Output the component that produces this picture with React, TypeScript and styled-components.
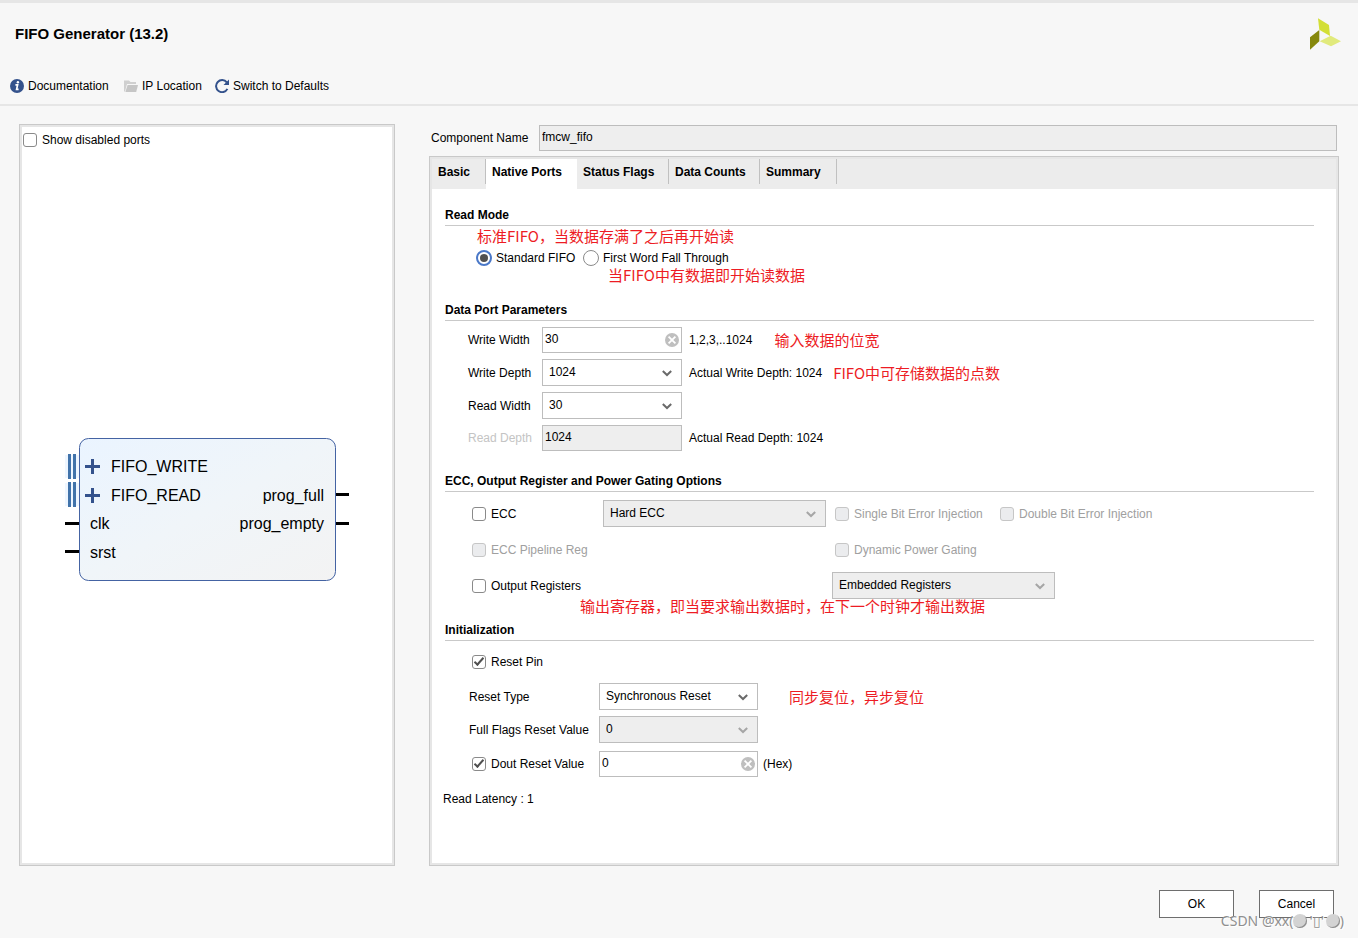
import React from "react";
import styled, { createGlobalStyle, css } from "styled-components";

const Global = createGlobalStyle`
  *, *::before, *::after { box-sizing: border-box; }
  body {
    margin: 0;
    background: #f7f7f7;
    color: #000;
    font: 12px/16px "Liberation Sans", Arial, sans-serif;
  }
  button, input, select { font: inherit; color: inherit; }
`;

const Page = styled.div`
  position: relative;
  min-height: 100vh;
  display: flex;
  flex-direction: column;
  border-top: 3px solid #e6e6e6;
`;

const Header = styled.header`
  padding: 15px 17px 8px 15px;
  border-bottom: 2px solid #e6e6e6;
`;

const TitleRow = styled.div`
  display: flex;
  align-items: center;
  justify-content: space-between;
`;

const Title = styled.h1`
  margin: 0;
  font-size: 15px;
  line-height: 20px;
`;

const Toolbar = styled.nav`
  display: grid;
  grid-template-columns: 102px 79px max-content;
  column-gap: 12px;
  margin: 26px 0 0 -5px;
`;

const ToolButton = styled.button`
  display: flex;
  align-items: center;
  gap: 4px;
  height: 20px;
  padding: 0;
  border: 0;
  background: none;
  white-space: nowrap;
`;

const Main = styled.main`
  flex: 1;
  display: grid;
  grid-template-columns: 376px minmax(0, 1fr);
  column-gap: 34px;
  padding: 18px 19px 0;
`;

const Frame = styled.section`
  display: flex;
  flex-direction: column;
  border: 1px solid #c9c9c9;
  background: #fff;
  box-shadow: inset 0 0 0 2px #e6e6e6;
  padding: 2px;
`;

const PortsHead = styled.div`
  height: 29px;
  padding: 5px 1px;
`;

const Diagram = styled.div`
  flex: 1;
  display: flex;
  align-items: center;
  justify-content: center;
`;

const Config = styled.div`
  display: flex;
  flex-direction: column;
`;

const NameRow = styled.div`
  display: grid;
  grid-template-columns: 108px minmax(0, 1fr);
  align-items: center;
  padding: 1px 2px 0;
  margin-bottom: 5px;
`;

const TabFrame = styled(Frame)`
  flex: 1;
`;

const TabList = styled.div`
  display: grid;
  grid-template-columns: 54px 91px 92px 91px 77px;
  align-items: start;
  height: 30px;
  background: #ececec;
`;

const Tab = styled.button<{ $active?: boolean }>`
  height: ${(p) => (p.$active ? 30 : 25)}px;
  padding: 0 0 ${(p) => (p.$active ? 4 : 0)}px 6px;
  border: 0;
  border-right: ${(p) => (p.$active ? "0" : "1px solid #c0c0c0")};
  background: ${(p) => (p.$active ? "#fff" : "none")};
  font-weight: bold;
  text-align: left;
  white-space: nowrap;
`;

const TabBody = styled.div`
  padding: 18px 22px 18px 11px;
`;

const SectionTitle = styled.h2`
  margin: 0 0 0 2px;
  padding-bottom: 2px;
  border-bottom: 1px solid #c9c9c9;
  font-size: 12px;
  line-height: 16px;
`;

const Group = styled.div<{ $top: number; $bottom: number }>`
  margin-left: 2px;
  padding-top: ${(p) => p.$top}px;
  padding-bottom: ${(p) => p.$bottom}px;
`;

const Row = styled.div<{ $indent: number; $below?: number }>`
  display: flex;
  align-items: center;
  padding-left: ${(p) => p.$indent}px;
  margin-bottom: ${(p) => p.$below ?? 0}px;
  white-space: nowrap;
`;

const OptionRow = styled(Row)`
  height: 27px;
`;

const FieldLabel = styled.label<{ $width: number; $muted?: boolean }>`
  width: ${(p) => p.$width}px;
  color: ${(p) => (p.$muted ? "#c4c4c4" : "inherit")};
`;

const Hint = styled.span<{ $gap?: number }>`
  margin-left: ${(p) => p.$gap ?? 7}px;
`;

const Note = styled.span<{ $gap?: number }>`
  margin-left: ${(p) => p.$gap ?? 0}px;
  color: #ed1c24;
  font: 15px/16px "Noto Sans CJK SC", sans-serif;
`;

const ChoiceLabel = styled.label<{ $width?: number; $gap?: number; $muted?: boolean }>`
  display: flex;
  align-items: center;
  gap: 5px;
  width: ${(p) => (p.$width ? `${p.$width}px` : "auto")};
  margin-left: ${(p) => p.$gap ?? 0}px;
  color: ${(p) => (p.$muted ? "#a0a0a0" : "inherit")};
`;

const checkMark = css`
  &:checked::after {
    content: "";
    width: 10px;
    height: 5px;
    margin-top: -3px;
    border: solid #505050;
    border-width: 0 0 2px 2px;
    transform: rotate(-48deg);
  }
`;

const CheckBox = styled.input.attrs({ type: "checkbox" })`
  appearance: none;
  display: flex;
  align-items: center;
  justify-content: center;
  width: 14px;
  height: 14px;
  margin: 0;
  border: 1px solid #8a8a8a;
  border-radius: 3px;
  background: #fff;
  ${checkMark}
  &:disabled {
    border-color: #c6c6c6;
    background: #ebecee;
  }
`;

const Radio = styled.input.attrs({ type: "radio" })`
  appearance: none;
  display: flex;
  align-items: center;
  justify-content: center;
  width: 16px;
  height: 16px;
  margin: 0 -1px 0 0;
  border: 1px solid #8a8a8a;
  border-radius: 50%;
  background: #fff;
  &:checked { border: 2px solid #4a78c8; }
  &:checked::after {
    content: "";
    width: 8px;
    height: 8px;
    border-radius: 50%;
    background: #505050;
  }
`;

const TextBox = styled.input`
  display: block;
  width: 100%;
  height: 26px;
  padding: 0 24px 2px 2px;
  border: 1px solid #bdbdbd;
  border-radius: 0;
  background: #fff;
  &:read-only { background: #eee; }
`;

const Control = styled.div<{ $width: number; $gap?: number }>`
  position: relative;
  width: ${(p) => p.$width}px;
  margin-left: ${(p) => p.$gap ?? 0}px;
`;

const SelectBox = styled.select`
  appearance: none;
  display: block;
  width: 100%;
  height: 27px;
  padding: 0 26px 2px 6px;
  border: 1px solid #bdbdbd;
  border-radius: 0;
  background: #fff;
  &:disabled {
    background: #eee;
    color: #000;
    opacity: 1;
  }
`;

const Chevron = styled.svg<{ $muted?: boolean }>`
  position: absolute;
  right: 10px;
  top: 11px;
  pointer-events: none;
  stroke: ${(p) => (p.$muted ? "#a6a6a6" : "#6a6a6a")};
`;

const ClearButton = styled.button`
  position: absolute;
  right: 3px;
  top: 6px;
  display: flex;
  padding: 0;
  border: 0;
  background: none;
`;

const Footer = styled.footer`
  display: flex;
  justify-content: flex-end;
  gap: 25px;
  padding: 24px 24px 20px;
`;

const DialogButton = styled.button`
  width: 75px;
  height: 28px;
  padding: 0;
  border: 1px solid #6e6e6e;
  background: #fff;
`;

const Watermark = styled.div`
  position: absolute;
  right: 14px;
  bottom: 7px;
  display: flex;
  align-items: center;
  color: #8f8f8f;
  font: 14px/20px "Noto Sans", sans-serif;
  text-shadow: 1px 1px 0 #fff;
  pointer-events: none;
`;

const Dot = styled.span`
  width: 14px;
  height: 14px;
  border-radius: 50%;
  background: #d3d3d3;
  box-shadow: inset -1px -1px 0 #8f8f8f;
`;

const Mouth = styled.span`
  padding: 0 2px;
`;

const Logo = () => (
  <svg width="32" height="32" viewBox="0 0 32 32" aria-label="Xilinx">
    <path d="M9 0.3 20 7 21 18 10.3 11.7Z" fill="#d3df36" />
    <path d="M10.3 12V23.3L1 31.7V19.3Z" fill="#86880c" />
    <path d="M10.7 23.3 21.7 17.7 32 23.3 22 28.3Z" fill="#e1ea7c" />
  </svg>
);

const InfoIcon = () => (
  <svg width="14" height="14" viewBox="0 0 14 14">
    <circle cx="7" cy="7" r="7" fill="#34528c" />
    <circle cx="7.9" cy="3.3" r="1.2" fill="#fff" />
    <path d="M5.4 5.9H7.6L6.6 10.4H8.6" fill="none" stroke="#fff" strokeWidth="1.7" />
  </svg>
);

const FolderIcon = () => (
  <svg width="14" height="14" viewBox="0 0 14 14">
    <path d="M0 12.5V1.5H5L6.5 3H12V5H3L1 12.5Z" fill="#d0d0d0" />
    <path d="M3.6 6H14L12.2 13H1.4Z" fill="#c6c6c6" />
  </svg>
);

const RefreshIcon = () => (
  <svg width="14" height="14" viewBox="0 0 14 14">
    <path d="M11.8 3.4A6 6 0 1 0 12.4 9.9" fill="none" stroke="#34528c" strokeWidth="2" />
    <path d="M14 0.5V6H8.5Z" fill="#34528c" />
  </svg>
);

const BUS_TOPS = [16, 44];

const BlockSymbol = () => (
  <svg width="284" height="143" viewBox="0 0 284 143" fontSize="16" fontFamily='"Liberation Sans", Arial, sans-serif'>
    <defs>
      <linearGradient id="block" x1="0" y1="0" x2="1" y2="1">
        <stop offset="0" stopColor="#eaf4ff" />
        <stop offset="0.5" stopColor="#f0f5f9" />
        <stop offset="1" stopColor="#f3f3f3" />
      </linearGradient>
    </defs>
    <rect x="14.5" y="0.5" width="256" height="142" rx="9" fill="url(#block)" stroke="#4463a3" />
    {BUS_TOPS.map((y) => (
      <g key={y}>
        <rect x="0" y={y + 1} width="14" height="23" fill="#eef6ff" />
        <path d={`M3 ${y}h3v25h-3zM8 ${y}h3v25h-3z`} fill="#4173aa" />
      </g>
    ))}
    <path d="M20 28.5H35M27.5 21V36M20 57.5H35M27.5 50V65" stroke="#34528c" strokeWidth="3" />
    <path d="M0 85.5H14M0 113.5H14M271 56.5H284M271 85.5H284" stroke="#000" strokeWidth="3" />
    <text x="46" y="34">FIFO_WRITE</text>
    <text x="46" y="63">FIFO_READ</text>
    <text x="25" y="91">clk</text>
    <text x="25" y="120">srst</text>
    <text x="259" y="63" textAnchor="end">prog_full</text>
    <text x="259" y="91" textAnchor="end">prog_empty</text>
  </svg>
);

type ChoiceProps = { label: string; width?: number; gap?: number; disabled?: boolean; checked?: boolean };

const Check = ({ label, width, gap, disabled, checked }: ChoiceProps) => (
  <ChoiceLabel $width={width} $gap={gap} $muted={disabled}>
    <CheckBox disabled={disabled} defaultChecked={checked} />
    {label}
  </ChoiceLabel>
);

type SelectProps = { value: string; width: number; id?: string; label?: string; gap?: number; disabled?: boolean };

const Select = ({ value, width, id, label, gap, disabled }: SelectProps) => (
  <Control $width={width} $gap={gap}>
    <SelectBox id={id} aria-label={label} disabled={disabled} defaultValue={value}>
      <option>{value}</option>
    </SelectBox>
    <Chevron $muted={disabled} width="10" height="7" viewBox="0 0 10 7">
      <path d="M0.8 1 5 5 9.2 1" fill="none" strokeWidth="2" />
    </Chevron>
  </Control>
);

const ClearableBox = ({ value, width, id, label }: { value: string; width: number; id?: string; label?: string }) => (
  <Control $width={width}>
    <TextBox id={id} aria-label={label} defaultValue={value} />
    <ClearButton type="button" aria-label="Clear">
      <svg width="14" height="14" viewBox="0 0 14 14">
        <circle cx="7" cy="7" r="7" fill="#bfbfbf" />
        <path d="M3.6 3.6 10.4 10.4M10.4 3.6 3.6 10.4" stroke="#fff" strokeWidth="1.8" />
      </svg>
    </ClearButton>
  </Control>
);

export default function App() {
  return (
    <>
      <Global />
      <Page>
        <Header>
          <TitleRow>
            <Title>FIFO Generator (13.2)</Title>
            <Logo />
          </TitleRow>
          <Toolbar>
            <ToolButton><InfoIcon />Documentation</ToolButton>
            <ToolButton><FolderIcon />IP Location</ToolButton>
            <ToolButton><RefreshIcon />Switch to Defaults</ToolButton>
          </Toolbar>
        </Header>

        <Main>
          <Frame>
            <PortsHead>
              <Check label="Show disabled ports" />
            </PortsHead>
            <Diagram>
              <BlockSymbol />
            </Diagram>
          </Frame>

          <Config>
            <NameRow>
              <label htmlFor="component-name">Component Name</label>
              <TextBox id="component-name" readOnly defaultValue="fmcw_fifo" />
            </NameRow>
            <TabFrame>
              <TabList role="tablist">
                <Tab role="tab">Basic</Tab>
                <Tab role="tab" aria-selected $active>Native Ports</Tab>
                <Tab role="tab">Status Flags</Tab>
                <Tab role="tab">Data Counts</Tab>
                <Tab role="tab">Summary</Tab>
              </TabList>
              <TabBody>
                <SectionTitle>Read Mode</SectionTitle>
                <Group $top={2} $bottom={19}>
                  <Row $indent={32} $below={6}>
                    <Note>标准FIFO，当数据存满了之后再开始读</Note>
                  </Row>
                  <Row $indent={31} $below={1}>
                    <ChoiceLabel $width={107}>
                      <Radio name="read-mode" defaultChecked />
                      Standard FIFO
                    </ChoiceLabel>
                    <ChoiceLabel>
                      <Radio name="read-mode" />
                      First Word Fall Through
                    </ChoiceLabel>
                  </Row>
                  <Row $indent={163}>
                    <Note>当FIFO中有数据即开始读数据</Note>
                  </Row>
                </Group>

                <SectionTitle>Data Port Parameters</SectionTitle>
                <Group $top={6} $bottom={22}>
                  <Row $indent={23} $below={6}>
                    <FieldLabel $width={74} htmlFor="write-width">Write Width</FieldLabel>
                    <ClearableBox id="write-width" value="30" width={140} />
                    <Hint>1,2,3,..1024</Hint>
                    <Note $gap={22}>输入数据的位宽</Note>
                  </Row>
                  <Row $indent={23} $below={6}>
                    <FieldLabel $width={74} htmlFor="write-depth">Write Depth</FieldLabel>
                    <Select id="write-depth" value="1024" width={140} />
                    <Hint>Actual Write Depth: 1024</Hint>
                    <Note $gap={11}>FIFO中可存储数据的点数</Note>
                  </Row>
                  <Row $indent={23} $below={6}>
                    <FieldLabel $width={74} htmlFor="read-width">Read Width</FieldLabel>
                    <Select id="read-width" value="30" width={140} />
                  </Row>
                  <Row $indent={23}>
                    <FieldLabel $width={74} $muted htmlFor="read-depth">Read Depth</FieldLabel>
                    <Control $width={140}>
                      <TextBox id="read-depth" readOnly defaultValue="1024" />
                    </Control>
                    <Hint>Actual Read Depth: 1024</Hint>
                  </Row>
                </Group>

                <SectionTitle>ECC, Output Register and Power Gating Options</SectionTitle>
                <Group $top={8} $bottom={8}>
                  <OptionRow $indent={27} $below={9}>
                    <Check label="ECC" width={131} />
                    <Select label="ECC type" value="Hard ECC" width={223} disabled />
                    <Check label="Single Bit Error Injection" width={165} gap={9} disabled />
                    <Check label="Double Bit Error Injection" disabled />
                  </OptionRow>
                  <OptionRow $indent={27} $below={9}>
                    <Check label="ECC Pipeline Reg" width={363} disabled />
                    <Check label="Dynamic Power Gating" disabled />
                  </OptionRow>
                  <OptionRow $indent={27} $below={-1}>
                    <Check label="Output Registers" width={360} />
                    <Select label="Register type" value="Embedded Registers" width={223} disabled />
                  </OptionRow>
                  <Row $indent={135}>
                    <Note>输出寄存器，即当要求输出数据时，在下一个时钟才输出数据</Note>
                  </Row>
                </Group>

                <SectionTitle>Initialization</SectionTitle>
                <Group $top={13} $bottom={14}>
                  <Row $indent={27} $below={13}>
                    <Check label="Reset Pin" checked />
                  </Row>
                  <Row $indent={24} $below={6}>
                    <FieldLabel $width={130} htmlFor="reset-type">Reset Type</FieldLabel>
                    <Select id="reset-type" value="Synchronous Reset" width={159} />
                    <Note $gap={31}>同步复位，异步复位</Note>
                  </Row>
                  <Row $indent={24} $below={8}>
                    <FieldLabel $width={130} htmlFor="flags-reset">Full Flags Reset Value</FieldLabel>
                    <Select id="flags-reset" value="0" width={159} disabled />
                  </Row>
                  <Row $indent={27}>
                    <Check label="Dout Reset Value" width={127} checked />
                    <ClearableBox label="Dout reset value in hex" value="0" width={159} />
                    <Hint $gap={5}>(Hex)</Hint>
                  </Row>
                </Group>
                <Row $indent={0}>Read Latency : 1</Row>
              </TabBody>
            </TabFrame>
          </Config>
        </Main>

        <Footer>
          <DialogButton>OK</DialogButton>
          <DialogButton>Cancel</DialogButton>
        </Footer>
        <Watermark>
          CSDN @xx(<Dot /><Mouth>'▯'</Mouth><Dot />)
        </Watermark>
      </Page>
    </>
  );
}
